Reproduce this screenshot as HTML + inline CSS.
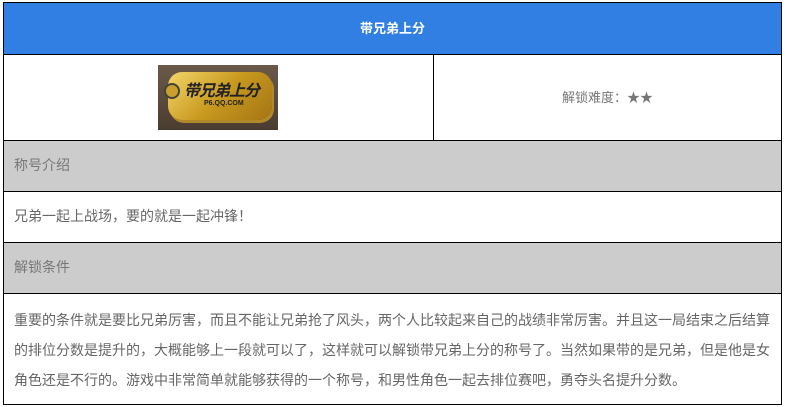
<!DOCTYPE html>
<html><head><meta charset="utf-8"><style>
body{margin:0;background:#fff;font-family:"Liberation Sans","Noto Sans CJK SC",sans-serif;}
.t{position:absolute;left:3px;top:2px;width:777px;border:1px solid #000;}
.r{position:absolute;left:0;width:777px;box-sizing:border-box;border-top:1px solid #000;}
.hd{top:0;height:51px;background:#317fe2;color:#fff;font-weight:bold;font-size:13px;text-align:center;line-height:51px;border-top:none}
.g{background:#cccccc;color:#777;font-size:14px;line-height:49px;padding-left:10px}
.w{color:#666;font-size:14px;padding-left:10px}
</style></head><body>
<div class="t" style="height:401px">
<div class="r hd">带兄弟上分</div>
<div class="r" style="top:51px;height:86px;">
 <div style="position:absolute;left:429px;top:0;width:1px;height:85px;background:#000"></div>
 <div style="position:absolute;left:154px;top:10px;width:120px;height:65px;background:linear-gradient(#6b5a4a,#4a3c30);overflow:hidden">
  <div style="position:absolute;left:10px;top:7px;width:104px;height:48px;border-radius:14px;background:linear-gradient(135deg,#f3d66a,#c99a1f 50%,#a47414);box-shadow:2px 3px 0 #b08a2a"></div>
  <div style="position:absolute;left:26px;top:12px;font-size:16px;font-weight:bold;font-style:italic;color:#222;letter-spacing:-1px">带兄弟上分</div>
  <div style="position:absolute;left:46px;top:35px;font-size:7px;font-weight:bold;color:#222">P6.QQ.COM</div>
  <div style="position:absolute;left:6px;top:18px;width:12px;height:12px;border-radius:50%;border:2px solid #443;background:#c9a030"></div>
 </div>
 <div style="position:absolute;left:430px;width:347px;top:0;height:85px;line-height:85px;text-align:center;color:#777;font-size:13px">解锁难度：★★</div>
</div>
<div class="r g" style="top:137px;height:51px">称号介绍</div>
<div class="r w" style="top:188px;height:51px;line-height:49px">兄弟一起上战场，要的就是一起冲锋！</div>
<div class="r g" style="top:239px;height:51px">解锁条件</div>
<div class="r w" style="top:290px;height:111px;padding-top:11px;line-height:30px;padding-right:8px">重要的条件就是要比兄弟厉害，而且不能让兄弟抢了风头，两个人比较起来自己的战绩非常厉害。并且这一局结束之后结算的排位分数是提升的，大概能够上一段就可以了，这样就可以解锁带兄弟上分的称号了。当然如果带的是兄弟，但是他是女角色还是不行的。游戏中非常简单就能够获得的一个称号，和男性角色一起去排位赛吧，勇夺头名提升分数。</div>
</div>
</body></html>
